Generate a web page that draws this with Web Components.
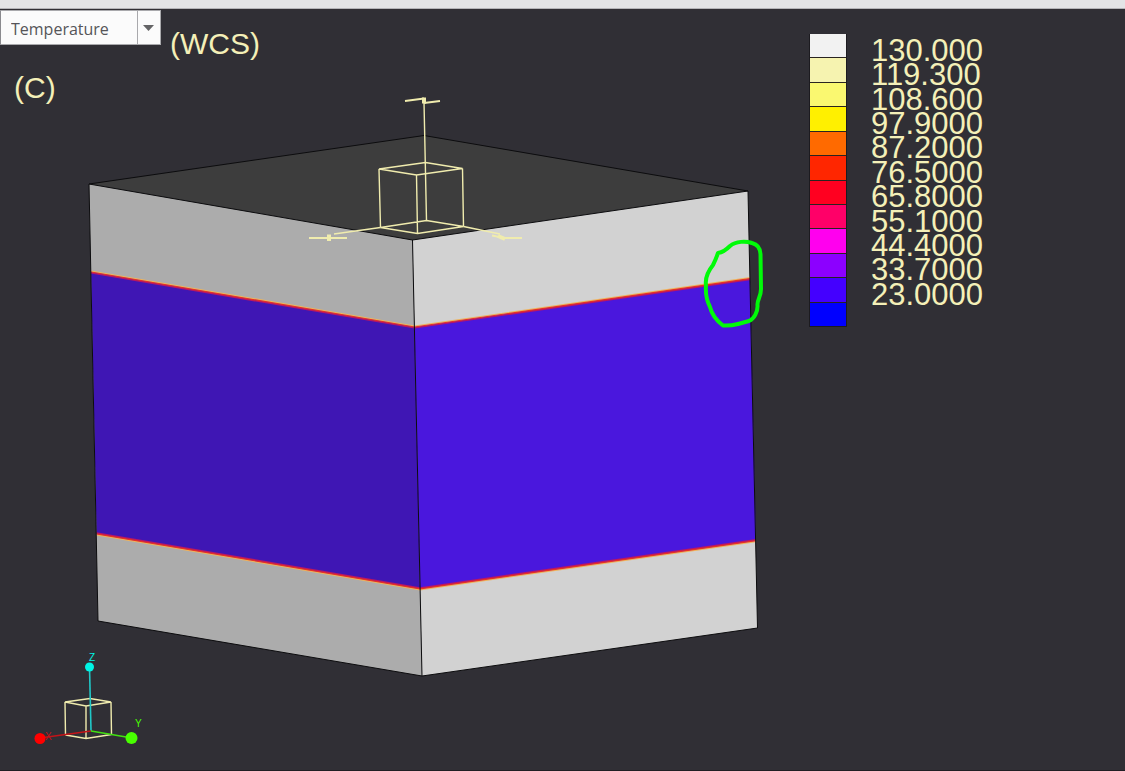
<!DOCTYPE html>
<html lang="en">
<head>
<meta charset="utf-8">
<meta name="viewport" content="width=device-width, initial-scale=1">
<title>Temperature (WCS)</title>
<style>
  body {
    margin: 0;
    background: #302f35;
  }
</style>
</head>
<body>

<result-window>
  <model-scene slot="scene"></model-scene>
  <quantity-select slot="quantity"></quantity-select>
  <scene-label slot="system">(WCS)</scene-label>
  <scene-label slot="unit">(C)</scene-label>
  <fringe-legend slot="legend"></fringe-legend>
</result-window>

<template id="result-window">
  <style>
    :host {
      display: flex;
      flex-direction: column;
      min-height: 100vh;
      box-sizing: border-box;
      border-bottom: 1px solid #201f24;
      background: #302f35;
      color: #f4f0b8;
      font-family: "Liberation Sans", Arial, sans-serif;
    }

    .strip {
      height: 8px;
      background: #e3e4e6;
      border-bottom: 1px solid #b4b4b8;
    }

    /* the scene and the annotations share one cell */
    .view {
      display: grid;
      flex: 1;
      overflow: hidden;
    }

    .scene,
    .overlay {
      grid-area: 1 / 1;
    }

    .overlay {
      z-index: 1;
      display: flex;
      justify-content: space-between;
      align-items: flex-start;
      padding-right: 142px;
    }

    .heading {
      display: flex;
      gap: 9px;
      padding-top: 1px;
    }

    .system {
      padding-top: 16px;
    }

    .unit {
      padding: 8px 14px;
    }

    .legend {
      padding-top: 25px;
    }
  </style>
  <div class="strip"></div>
  <div class="view">
    <div class="scene"><slot name="scene"></slot></div>
    <div class="overlay">
      <div>
        <div class="heading">
          <slot name="quantity"></slot>
          <div class="system"><slot name="system"></slot></div>
        </div>
        <div class="unit"><slot name="unit"></slot></div>
      </div>
      <div class="legend"><slot name="legend"></slot></div>
    </div>
  </div>
</template>

<template id="scene-label">
  <style>
    :host {
      display: block;
      font-size: 30px;
      line-height: 36px;
      white-space: nowrap;
    }
  </style>
  <slot></slot>
</template>

<template id="quantity-select">
  <style>
    :host {
      display: grid;
      grid-template-columns: 136px 23px;
      align-self: flex-start;
      box-sizing: border-box;
      height: 35px;
      border: 1px solid #a9a9ac;
      border-left-color: #8a8a8e;
      background: #fbfbfb;
    }

    select {
      grid-area: 1 / 1 / 2 / 3;
      appearance: none;
      margin: 0;
      padding: 2px 24px 0 10px;
      border: 0;
      border-radius: 0;
      background: transparent;
      color: #555558;
      font: 16px "Open Sans", "Noto Sans", sans-serif;
    }

    .arrow {
      grid-area: 1 / 2;
      display: flex;
      align-items: center;
      justify-content: center;
      border-left: 1px solid #a9a9ac;
      pointer-events: none;
    }
  </style>
  <select aria-label="Displayed quantity">
    <option>Temperature</option>
  </select>
  <span class="arrow">
    <svg width="12" height="8" viewBox="0 0 12 8" aria-hidden="true"><path d="M0 1h11L5.5 7z" fill="#646466"/></svg>
  </span>
</template>

<template id="fringe-legend">
  <style>
    :host {
      display: flex;
      gap: 24px;
      height: 293px;
    }

    .swatches {
      display: flex;
      flex-direction: column;
      width: 36px;
      border: 1px solid #1c1b20;
      border-top-width: 0;
    }

    .swatches span {
      flex: 1;
    }

    .swatches span + span {
      border-top: 1px solid #2a2420;
    }

    ol {
      display: flex;
      flex-direction: column;
      margin: 0;
      padding: 5px 0 20px;
      list-style: none;
      font-size: 31px;
      line-height: 24px;
    }

    li {
      flex: 1;
    }
  </style>
  <div class="swatches"></div>
  <ol></ol>
</template>

<template id="model-scene">
  <style>
    :host {
      display: block;
    }

    svg {
      display: block;
      width: 100%;
    }

    .edge {
      fill: none;
      stroke: #0c0c0e;
      stroke-width: 1;
    }

    .wire {
      fill: none;
      stroke: #f0ecae;
      stroke-width: 1.4;
    }

    text {
      font-family: "Liberation Sans", Arial, sans-serif;
      font-size: 10px;
    }
  </style>
  <svg viewBox="0 9 1125 761" preserveAspectRatio="xMinYMin meet" role="img" aria-label="Temperature fringe on a block">
    <!-- block faces -->
    <path d="M89 184L424 135.5 748 191 412.5 240z" fill="#3d3d3d"/>
    <path d="M89 184L412.5 240 422 676 98 621z" fill="#acacac"/>
    <path d="M412.5 240L748 191 757.5 628 422 676z" fill="#d2d2d2"/>
    <path d="M91 272L414.5 327 420 589 96.5 534z" fill="#3f16b4"/>
    <path d="M414.5 327L750 278.5 756 541 420 589z" fill="#4a17dd"/>

    <!-- thin gradient between hot and cold -->
    <g fill="none" stroke-width="1.2">
      <path d="M91 271L414.5 326 750 277.7" stroke="#eeb45c"/>
      <path d="M91 273L414.5 328 750 279.7" stroke="#b81468"/>
      <path d="M91 272L414.5 327 750 278.7" stroke="#e83024"/>
      <path d="M96.5 534.8L420 589.8 756 541.6" stroke="#eeb45c"/>
      <path d="M96.5 532.8L420 587.8 756 539.6" stroke="#b81468"/>
      <path d="M96.5 533.8L420 588.8 756 540.6" stroke="#e83024"/>
    </g>

    <path class="edge" d="M89 184L424 135.5 748 191 412.5 240zM89 184L98 621 422 676 757.5 628 748 191M412.5 240L422 676"/>

    <!-- coordinate system on the top face -->
    <g class="wire">
      <path d="M379 169L425.5 162.5 462.5 168.5 416.5 175zM380.5 227.5L426.5 220.5 463.5 226.5 417.5 233.5zM379 169L380.5 227.5M416.5 175L417.5 233.5M462.5 168.5L463.5 226.5"/>
      <path d="M424 102L426.5 220.5M380.5 227.5L334 234M463.5 226.5L500 234"/>
      <path d="M405 101L424 98.5M424 103L440 101M309 238H347M492 235.5L504 238H522" stroke-width="1.8"/>
      <path d="M424 97.5V103.5M329 234.5V241M498 236L505 239" stroke-width="4"/>
    </g>

    <!-- orientation triad -->
    <g class="wire">
      <path d="M65 702L90 698.5 111 702 86 706zM65.5 735L86 738.5 111.5 734.5M65 702L65.5 735M86 706L86 738.5M111 702L111.5 734.5"/>
    </g>
    <path d="M91 731L89.5 667" stroke="#20c8c8" stroke-width="1.6"/>
    <path d="M91 731L40 738" stroke="#c41418" stroke-width="1.6"/>
    <path d="M91 731L132 738" stroke="#42e010" stroke-width="1.6"/>
    <circle cx="89.5" cy="667" r="4.5" fill="#00f4e4"/>
    <circle cx="40" cy="738.5" r="5.5" fill="#ff0000"/>
    <circle cx="131.5" cy="738" r="6" fill="#48ff00"/>
    <text x="89" y="661" fill="#00f4e4">Z</text>
    <text x="45" y="740" fill="#c41418">X</text>
    <text x="135" y="727" fill="#48ff00">Y</text>

    <!-- markup drawn round the transition -->
    <path d="M718 253Q724 252 730 246C736 241 746 241 752 243Q760 245 760.5 254L761 289C761 297 757 300 757.5 305C758 312 754 319 749 321L738 324Q730 326 723 325.5C717 321 712 315 710 307Q705 297 706 285C705 278 709 270 713 265Q716 259 718 253z" fill="none" stroke="#00fb08" stroke-width="4" stroke-linejoin="round"/>
  </svg>
</template>

<script>

const instantiate = (host, id) => {
  const template = document.getElementById(id);
  const root = host.attachShadow({mode: 'open'});
  root.appendChild(template.content.cloneNode(true));
  return root;
};

class ResultWindow extends HTMLElement {
  constructor() {
    super();
    instantiate(this, 'result-window');
  }
}

class SceneLabel extends HTMLElement {
  constructor() {
    super();
    instantiate(this, 'scene-label');
  }
}

class QuantitySelect extends HTMLElement {
  constructor() {
    super();
    instantiate(this, 'quantity-select');
  }
}

class ModelScene extends HTMLElement {
  constructor() {
    super();
    instantiate(this, 'model-scene');
  }
}

class FringeLegend extends HTMLElement {
  constructor() {
    super();
    const root = instantiate(this, 'fringe-legend');
    this.swatches = root.querySelector('.swatches');
    this.list = root.querySelector('ol');

    // one more colour than there are limits
    this.colors = ['#f2f2f2', '#f6f3b0', '#faf870', '#fff000', '#ff6a00', '#ff2600',
      '#ff0020', '#ff0068', '#ff00ee', '#8c00ff', '#4400ff', '#0000ff'];
    this.limits = ['130.000', '119.300', '108.600', '97.9000', '87.2000', '76.5000',
      '65.8000', '55.1000', '44.4000', '33.7000', '23.0000'];

    this.colors.forEach(color => {
      const swatch = document.createElement('span');
      swatch.style.background = color;
      this.swatches.appendChild(swatch);
    });

    this.limits.forEach(limit => {
      const li = document.createElement('li');
      li.textContent = limit;
      this.list.appendChild(li);
    });
  }
}

customElements.define('result-window', ResultWindow);
customElements.define('scene-label', SceneLabel);
customElements.define('quantity-select', QuantitySelect);
customElements.define('model-scene', ModelScene);
customElements.define('fringe-legend', FringeLegend);

</script>
</body>
</html>
